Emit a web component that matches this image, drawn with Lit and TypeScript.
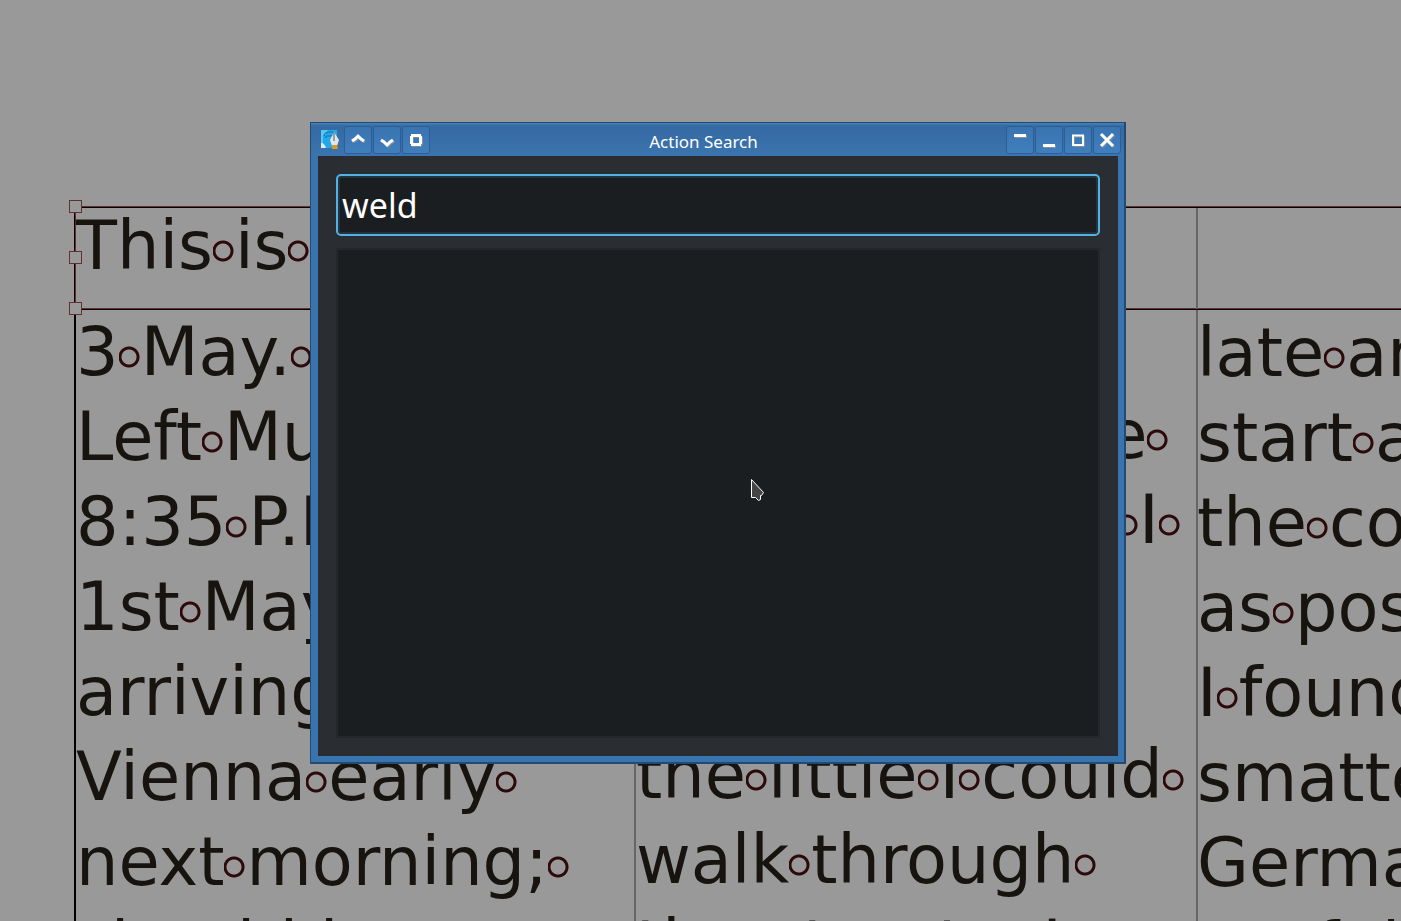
import { LitElement, html, css, svg } from "lit";
import { customElement, property } from "lit/decorators.js";

const COLUMNS = [
  ["3 May. Bistritz. ", "Left Munich at ", "8:35 P.M., on ", "1st May, ", "arriving at ", "Vienna early ", "next morning; ", "should have "],
  ["a wonderful ", "place, from the ", "glimpse which I ", "got of it from ", "the train and ", "the little I could ", "walk through ", "the streets. I "],
  ["late and ", "start as near ", "the correct ", "as possible. ", "I found my ", "smattering of ", "German ", "useful here; "],
];

@customElement("text-line")
class TextLine extends LitElement {
  @property() text = "";
  static styles = css`
    :host { display: block; white-space: pre; height: 85px; line-height: 85px; }
    .space {
      display: inline-block; width: 22px; height: 85px; vertical-align: top;
      background: radial-gradient(circle at 10px 47px, transparent 7px, #2c090b 8px, #2c090b 10px, transparent 11px);
    }
  `;
  render() {
    return this.text.split(/( )/).map((part) => (part === " " ? html`<span class="space"> </span>` : part));
  }
}

@customElement("action-search")
class ActionSearch extends LitElement {
  static styles = css`
    :host {
      display: flex; flex-direction: column; box-sizing: border-box;
      background: #3a74ae; border: 1px solid #234a73; border-right-width: 2px;
      padding: 0 6px 6px 7px; border-bottom-width: 2px;
      font-family: "Noto Sans", sans-serif; color: #fff;
    }
    .bar {
      display: flex; align-items: center;
      height: 33px; margin: 0 -6px 0 -7px; padding: 0 3px 0 6px;
      background: linear-gradient(#4484c2 0, #3569a2 3px, #3b74ae);
    }
    .group { display: flex; flex: none; gap: 1px; align-items: center; }
    .logo { flex: none; width: 24px; height: 24px; margin-right: 2px; }
    h1 {
      flex: 1; margin: 0; padding: 4px 29px 0 0; text-align: center;
      font-size: 17px; line-height: 24px; font-weight: 400;
    }
    button {
      width: 28px; height: 28px; padding: 0; border: 1px solid #2d5f93; border-radius: 3px;
      background: linear-gradient(#3974b1, #417ebd); display: grid; place-items: center;
    }
    button svg { width: 20px; height: 20px; display: block; filter: drop-shadow(1px 1px 0 #7d8fa3); }
    .body {
      flex: 1; display: flex; flex-direction: column; gap: 12px;
      background: #2a2d32; padding: 18px;
    }
    input {
      box-sizing: border-box; width: 100%; height: 62px; padding: 0 4px;
      border: 2px solid #53b2e4; border-radius: 5px; outline: none;
      background: #1b1e20; box-shadow: inset 0 0 0 2px #22333d;
      font: 34px/50px "Noto Sans", sans-serif; color: #fff; caret-color: transparent;
    }
    .results { flex: 1; margin: 0; padding: 0; list-style: none; background: #1b1e20; border: 1px solid #23262a; box-shadow: inset 0 0 0 1px #25282c; }
  `;
  private icon(d: string, width = 3) {
    return html`<svg viewBox="0 0 20 20" fill="none" stroke="#fff" stroke-width=${width}>${svg`<path d=${d}></path>`}</svg>`;
  }
  render() {
    return html`
      <header class="bar">
        <div class="group">
          <svg class="logo" viewBox="0 0 24 24">
            <path d="M4 2h16v14l-4 4H4z" fill="#24a9e6"></path>
            <path d="M4 2h7L6 8v12H4z" fill="#56c6f3"></path>
            <path d="M7 8c0-4 5-4 8-4 4 0 2 4-2 4s-5 0-4 2" fill="none" stroke="#126fa8"></path>
            <path d="M4 15c3 0 4 2 5 5H4z" fill="#d9edf2"></path>
            <path d="M17 4l5 8-2 6h-5l-2-6z" fill="#dfe5e8"></path>
            <path d="M17 5v8" stroke="#4b5c68"></path>
            <path d="M15 17h5l1 4h-6z" fill="#d99a24"></path>
          </svg>
          <button aria-label="Keep above">${this.icon("M4 11l3-2 3-3 3 3 3 2")}</button>
          <button aria-label="Keep below">${this.icon("M4 10l3 2 3 3 3-3 3-2")}</button>
          <button aria-label="On all desktops">${this.icon("M5 5.500h10M5 14.500h10M5.500 6v8M14.500 6v8")}</button>
        </div>
        <h1>Action Search</h1>
        <div class="group">
          <button aria-label="Shade">${this.icon("M4 5.500h12")}</button>
          <button aria-label="Minimize">${this.icon("M4 15.500h12")}</button>
          <button aria-label="Maximize">${this.icon("M4 5.500h12M5 5v10h10V5", 2)}</button>
          <button aria-label="Close">${this.icon("M4 4l12 12M16 4L4 16")}</button>
        </div>
      </header>
      <div class="body">
        <input type="text" aria-label="Search actions" .value=${"weld"} />
        <ul class="results" aria-label="Matching actions"></ul>
      </div>
    `;
  }
}

@customElement("app-root")
class AppRoot extends LitElement {
  static styles = css`
    :host { display: block; position: relative; height: 100vh; overflow: hidden; background: #999; color: #17140f; font: 67px "DejaVu Sans", sans-serif; }
    .sheet { padding: 207px 0 0 74px; }
    .row { display: grid; grid-template-columns: 560px 562px 1fr; border-top: 1px solid #000; box-shadow: 0 -1px #652f2f; }
    .title { position: relative; height: 101px; }
    .title text-line { margin-top: -4px; }
    .col { padding-left: 2px; box-shadow: inset 2px 0 #666; min-width: 0; }
    .col:first-child { box-shadow: inset 2px 0 #000; }
    .title .col:first-child { box-shadow: inset 1px 0 #000, inset 2px 0 #652f2f; }
    .body .col:nth-child(2) { margin-top: -2px; }
    .body .col:nth-child(3) { padding: 1px 0 0 1px; }
    .handles { position: absolute; left: -5px; top: -8px; bottom: -6px; display: flex; flex-direction: column; justify-content: space-between; }
    .handle { box-sizing: border-box; width: 13px; height: 13px; border: 1px solid #652f2f; background: #999; }
    .window { position: absolute; left: 310px; top: 122px; width: 816px; height: 642px; }
    .cursor { position: absolute; left: 750px; top: 478px; width: 14px; height: 24px; }
  `;
  render() {
    return html`
      <main class="sheet">
        <div class="row title">
          <div class="col"><text-line text="This is a Title"></text-line></div>
          <div class="col"></div>
          <div class="col"></div>
          <div class="handles"><div class="handle"></div><div class="handle"></div><div class="handle"></div></div>
        </div>
        <div class="row body">
          ${COLUMNS.map((lines) => html`<div class="col">${lines.map((l) => html`<text-line text=${l}></text-line>`)}</div>`)}
        </div>
      </main>
      <action-search class="window"></action-search>
      <svg class="cursor" viewBox="0 0 14 24"><path d="M1.500 1.500v18h4l3 3 2-1v-4h1l2-3z" fill="#444" stroke="#fff"></path></svg>
    `;
  }
}
